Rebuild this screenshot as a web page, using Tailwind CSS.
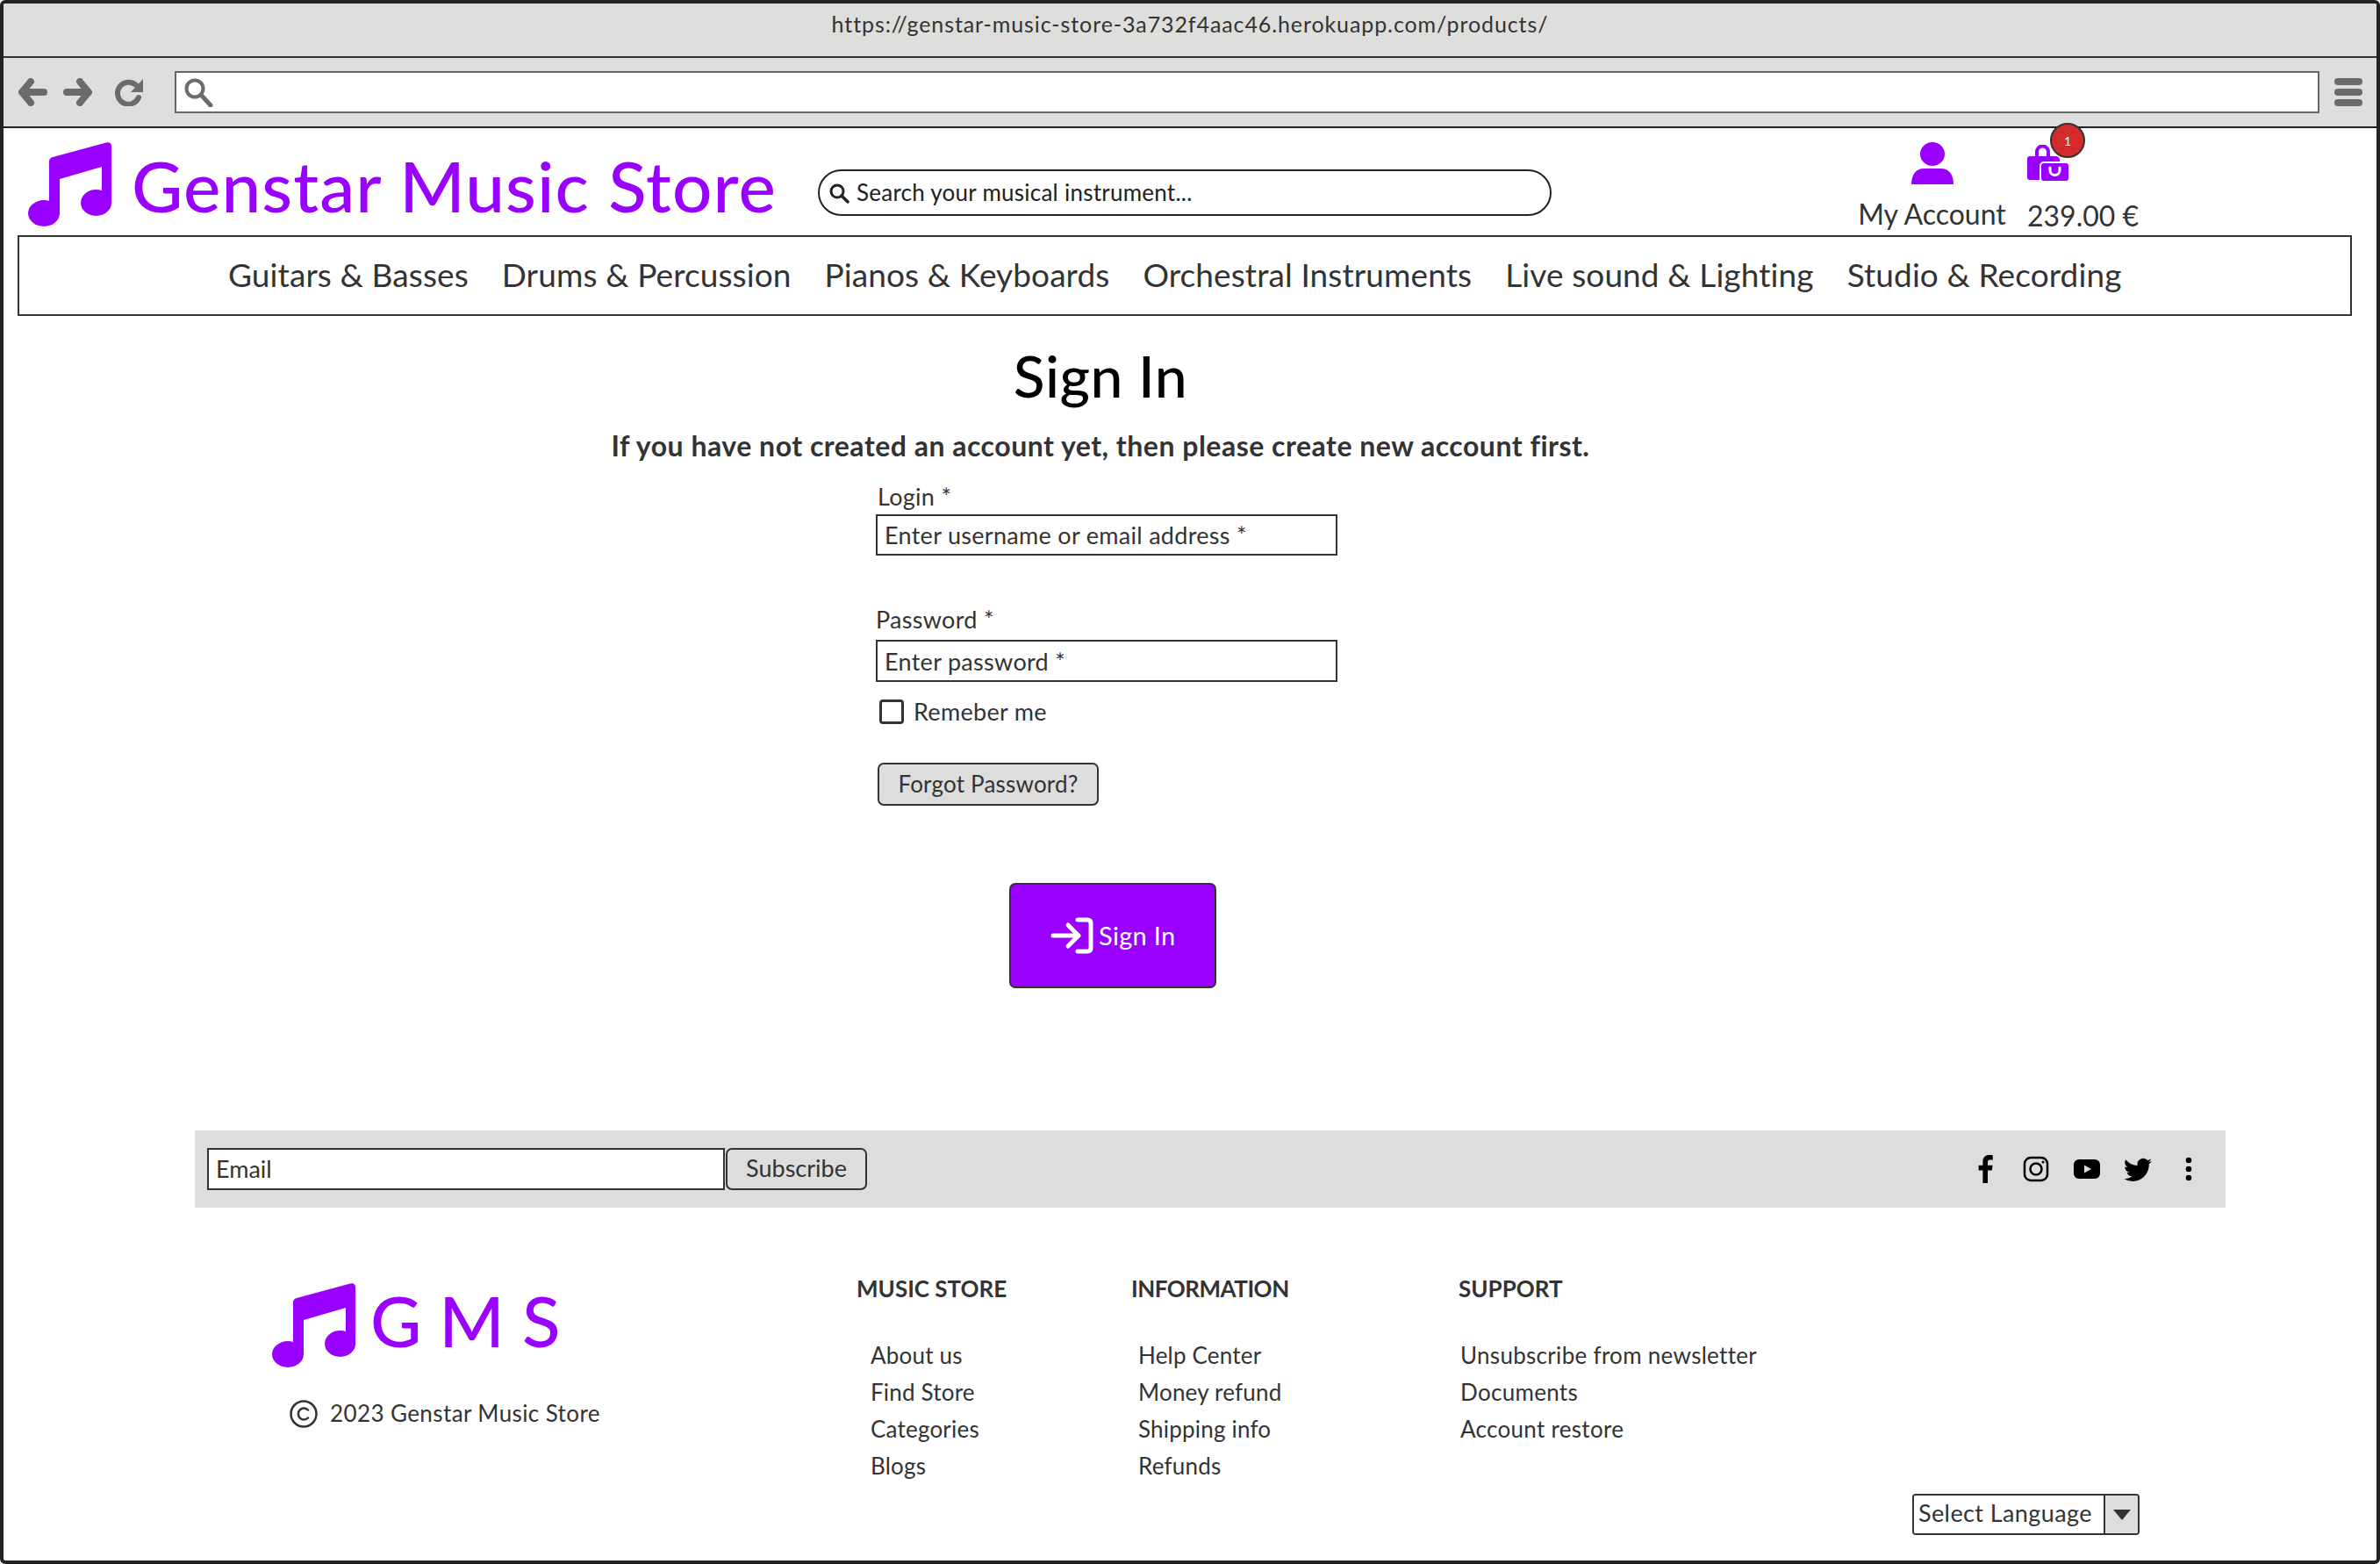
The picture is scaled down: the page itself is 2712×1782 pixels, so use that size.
<!DOCTYPE html>
<html lang="en">
<head>
    <meta charset="UTF-8">
    <title>Genstar Music Store</title>
    <script src="https://cdn.jsdelivr.net/npm/@tailwindcss/browser@4"></script>
</head>
<body class="bg-white font-['Lato',sans-serif] text-[#333]">
    <svg class="hidden">
        <symbol id="note" viewBox="0 0 96 96">
            <path d="M24 22Q24 18 28 17L89 .5Q95-.5 95 5V70H84V28L36 42V82H24Z" fill="#9900ff"/>
            <ellipse cx="18" cy="81" rx="18" ry="15" fill="#9900ff"/>
            <ellipse cx="77.5" cy="69" rx="17.5" ry="15" fill="#9900ff"/>
        </symbol>
    </svg>

    <div class="w-[2712px] h-[1782px] border-4 border-[#222] rounded-[6px] overflow-hidden">
        <!-- Browser chrome -->
        <div class="h-[62px] bg-[#dededc] border-b-2 border-[#333] flex justify-center pt-[7px] text-[25px] leading-[32px] tracking-[0.9px]">
            https://genstar-music-store-3a732f4aac46.herokuapp.com/products/
        </div>
        <div class="h-[80px] bg-[#dededc] border-b-2 border-[#222] flex items-center">
            <svg class="ml-[17px] w-[33px] h-[32px]" viewBox="0 0 33 32" fill="none" stroke="#6b6b6b" stroke-width="8" stroke-linecap="round" stroke-linejoin="round"><path d="M14 4 4 16l10 12M5 16h24"/></svg>
            <svg class="ml-[18px] w-[33px] h-[32px]" viewBox="0 0 33 32" fill="none" stroke="#6b6b6b" stroke-width="8" stroke-linecap="round" stroke-linejoin="round"><path d="M19 4l10 12-10 12M28 16H4"/></svg>
            <svg class="ml-[26px] w-[33px] h-[32px]" viewBox="0 0 33 32"><path d="M27 22a12.500 12.500 0 1 1-3-14" fill="none" stroke="#6b6b6b" stroke-width="6" stroke-linecap="round"/><path d="M32 1v15H18Z" fill="#6b6b6b"/></svg>
            <div class="ml-[35px] w-[2444px] h-[48px] bg-white border-2 border-[#666] flex items-center pl-[9px]">
                <svg class="w-[33px] h-[33px]" viewBox="0 0 33 33" fill="none" stroke="#6b6b6b" stroke-linecap="round"><circle cx="12" cy="12" r="9.500" stroke-width="4"/><path d="M19 19 30 31" stroke-width="5"/></svg>
            </div>
            <div class="ml-[17px] flex flex-col gap-[4px]">
                <div class="w-[32px] h-[8px] bg-[#6b6b6b] rounded-full"></div>
                <div class="w-[32px] h-[8px] bg-[#6b6b6b] rounded-full"></div>
                <div class="w-[32px] h-[8px] bg-[#6b6b6b] rounded-full"></div>
            </div>
        </div>

        <!-- Header -->
        <div class="h-[122px] flex relative">
            <svg class="ml-[28px] mt-[16px] w-[96px] h-[96px]"><use href="#note"/></svg>
            <div class="w-[804px] pl-[22px] pt-[20px] text-[80px] leading-[90px] font-medium text-[#9900ff] tracking-[1.1px] whitespace-nowrap">Genstar Music Store</div>
            <div class="mt-[47px] w-[836px] h-[53px] border-2 border-[#222] rounded-full flex items-center pl-[10px]">
                <svg class="w-[24px] h-[24px] shrink-0" viewBox="0 0 24 24" fill="none" stroke="#222" stroke-linecap="round"><circle cx="10" cy="10" r="7" stroke-width="3"/><path d="M15 15l7 7" stroke-width="3.500"/></svg>
                <input class="ml-[8px] w-[780px] text-[26px] tracking-[0.25px] text-[#222] placeholder:text-[#222] outline-none" placeholder="Search your musical instrument...">
            </div>
            <div class="ml-[352px] w-[163px] flex flex-col items-center">
                <svg class="mt-[16px] w-[48px] h-[48px]" viewBox="0 0 48 48" fill="#9900ff"><ellipse cx="24" cy="13.500" rx="14" ry="13.500"/><path d="M0 48C0 36 6 30 14 30H34C42 30 48 36 48 48Z"/></svg>
                <div class="mt-[14px] text-[32px] leading-[40px] whitespace-nowrap">My Account</div>
            </div>
            <div class="ml-[27px] flex flex-col">
                <svg class="mt-[19px] w-[48px] h-[42px]" viewBox="0 0 48 42"><path d="M11 14V8a6.500 6.500 0 0 1 13 0v6" fill="none" stroke="#9900ff" stroke-width="4"/><path d="M3 13H32Q37 13 37 18V37Q37 40 34 40H3Q0 40 0 37V16Q0 13 3 13Z" fill="#9900ff"/><rect x="15" y="20" width="33" height="22" rx="4" fill="#9900ff" stroke="#fff" stroke-width="2"/><path d="M26 26v3a5.500 5.500 0 0 0 11 0v-3" fill="none" stroke="#fff" stroke-width="3" stroke-linecap="round"/></svg>
                <div class="mt-[19px] text-[32px] leading-[40px] whitespace-nowrap">239.00 €</div>
            </div>
            <div class="absolute left-[2332px] top-[-6px] w-[40px] h-[40px] rounded-full bg-[#d32a2a] border-2 border-[#333] flex items-center justify-center text-white text-[14px]">1</div>
        </div>

        <!-- Nav -->
        <nav class="ml-[16px] w-[2660px] h-[92px] border-2 border-[#333] flex items-center pl-[238px] pb-[3px] gap-[38px] text-[37px] tracking-[0.1px] whitespace-nowrap">
            <a>Guitars &amp; Basses</a>
            <a>Drums &amp; Percussion</a>
            <a>Pianos &amp; Keyboards</a>
            <a>Orchestral Instruments</a>
            <a>Live sound &amp; Lighting</a>
            <a>Studio &amp; Recording</a>
        </nav>

        <!-- Sign in form -->
        <main>
            <h1 class="w-[2500px] mt-[34px] h-[68px] text-center text-[66px] leading-[68px] tracking-[0.5px] font-medium text-black">Sign In</h1>
            <p class="w-[2500px] mt-[26px] h-[40px] text-center text-[32px] leading-[40px] font-bold tracking-[0.5px]">If you have not created an account yet, then please create new account first.</p>
            <form class="ml-[994px] w-[526px] text-[27px] tracking-[0.3px]">
                <label class="block mt-[23px] h-[30px] leading-[30px] pl-[2px]">Login *</label>
                <input class="block mt-[5px] w-full h-[47px] border-2 border-[#333] px-[8px] placeholder:text-[#333] outline-none" placeholder="Enter username or email address *">
                <label class="block mt-[58px] h-[30px] leading-[30px]">Password *</label>
                <input class="block mt-[8px] w-full h-[48px] border-2 border-[#333] px-[8px] placeholder:text-[#333] outline-none" placeholder="Enter password *">
                <div class="mt-[20px] flex items-center h-[28px] pl-[4px]">
                    <div class="w-[28px] h-[28px] border-[3px] border-[#333] rounded-[4px]"></div>
                    <span class="ml-[11px]">Remeber me</span>
                </div>
                <button type="button" class="block mt-[44px] ml-[2px] w-[252px] h-[49px] border-2 border-[#333] rounded-[7px] bg-[#ddd] text-[26px] tracking-[0.2px]">Forgot Password?</button>
                <button type="button" class="mt-[88px] ml-[152px] w-[236px] h-[120px] border-2 border-[#333] rounded-[7px] bg-[#9900ff] text-white flex items-center pl-[45px]">
                    <svg class="w-[50px] h-[42px]" viewBox="0 0 50 42" fill="none" stroke="#fff" stroke-width="5" stroke-linecap="round" stroke-linejoin="round"><path d="M3 21H32M20 9l12 12-12 12M31 3h11q4 0 4 4v28q0 4-4 4H31"/></svg>
                    <span class="ml-[5px] text-[29px]">Sign In</span>
                </button>
            </form>
        </main>

        <!-- Newsletter bar -->
        <div class="mt-[162px] ml-[218px] w-[2314px] h-[88px] bg-[#ddd] flex items-center pl-[14px] text-[27px]">
            <input class="w-[590px] h-[48px] bg-white border-2 border-[#333] px-[8px] pb-[2px] placeholder:text-[#333] outline-none" placeholder="Email">
            <button type="button" class="ml-[1px] w-[161px] h-[48px] border-2 border-[#333] rounded-[7px] bg-[#ddd] pb-[2px]">Subscribe</button>
            <div class="ml-auto mr-[26px] flex items-center gap-[26px]">
                <svg class="w-[32px] h-[32px]" viewBox="0 0 16 16" fill="#000"><path d="M9.500 16V8.700h2.400l.4-2.800H9.500V4.100c0-.8.2-1.400 1.400-1.400h1.500V.2C12.100.1 11.300 0 10.300 0 8.200 0 6.700 1.300 6.700 3.700v2.200H4.300v2.800h2.400V16z"/></svg>
                <svg class="w-[32px] h-[32px]" viewBox="0 0 32 32" fill="none" stroke="#000" stroke-width="2.500"><rect x="3" y="3" width="26" height="26" rx="7"/><circle cx="16" cy="16" r="6.500"/><circle cx="24" cy="8" r="1.500" fill="#000" stroke="none"/></svg>
                <svg class="w-[32px] h-[32px]" viewBox="0 0 32 32"><rect x="1" y="5" width="30" height="22" rx="6" fill="#000"/><path d="M13 11.500v9l8-4.500Z" fill="#ddd"/></svg>
                <svg class="w-[32px] h-[32px]" viewBox="0 0 16 16" fill="#000"><path d="M5.026 15c6.038 0 9.341-5.003 9.341-9.334 0-.14 0-.282-.006-.422A6.685 6.685 0 0 0 16 3.542a6.658 6.658 0 0 1-1.889.518 3.301 3.301 0 0 0 1.447-1.817 6.533 6.533 0 0 1-2.087.793A3.286 3.286 0 0 0 7.875 6.030a9.325 9.325 0 0 1-6.767-3.429 3.289 3.289 0 0 0 1.018 4.382A3.323 3.323 0 0 1 .64 6.575v.045a3.288 3.288 0 0 0 2.632 3.218 3.203 3.203 0 0 1-.865.115 3.230 3.230 0 0 1-.614-.057 3.283 3.283 0 0 0 3.067 2.277A6.588 6.588 0 0 1 .78 13.580a6.320 6.320 0 0 1-.78-.045A9.344 9.344 0 0 0 5.026 15z"/></svg>
                <svg class="w-[32px] h-[32px]" viewBox="0 0 32 32" fill="#000"><circle cx="16" cy="6" r="3.300"/><circle cx="16" cy="16" r="3.300"/><circle cx="16" cy="26" r="3.300"/></svg>
            </div>
        </div>

        <!-- Footer -->
        <footer class="mt-[77px] ml-[306px] flex text-[26px]">
            <div class="w-[666px]">
                <div class="mt-[9px] flex items-center">
                    <svg class="w-[96px] h-[96px]"><use href="#note"/></svg>
                    <span class="ml-[16px] mt-[-12px] text-[80px] leading-[90px] font-medium text-[#9900ff] tracking-[20px] whitespace-nowrap">GMS</span>
                </div>
                <div class="mt-[33px] ml-[20px] flex items-center">
                    <svg class="w-[32px] h-[32px]" viewBox="0 0 32 32" fill="none" stroke="#333" stroke-width="2.500"><circle cx="16" cy="16" r="14.500"/><path d="M21 11.500a6.500 6.500 0 1 0 0 9" stroke-linecap="round"/></svg>
                    <span class="ml-[14px] whitespace-nowrap tracking-[0.4px]">2023 Genstar Music Store</span>
                </div>
            </div>
            <div class="w-[313px]">
                <h3 class="h-[30px] leading-[30px] font-bold">MUSIC STORE</h3>
                <ul class="mt-[40px] pl-[16px] leading-[42px] tracking-[0.2px]">
                    <li>About us</li>
                    <li>Find Store</li>
                    <li>Categories</li>
                    <li>Blogs</li>
                </ul>
            </div>
            <div class="w-[373px]">
                <h3 class="h-[30px] leading-[30px] font-bold tracking-[-0.5px]">INFORMATION</h3>
                <ul class="mt-[40px] pl-[8px] leading-[42px] tracking-[0.2px]">
                    <li>Help Center</li>
                    <li>Money refund</li>
                    <li>Shipping info</li>
                    <li>Refunds</li>
                </ul>
            </div>
            <div>
                <h3 class="h-[30px] leading-[30px] font-bold">SUPPORT</h3>
                <ul class="mt-[40px] pl-[2px] leading-[42px] whitespace-nowrap tracking-[0.3px]">
                    <li>Unsubscribe from newsletter</li>
                    <li>Documents</li>
                    <li>Account restore</li>
                </ul>
            </div>
        </footer>
        <div class="mt-[11px] ml-[2175px] w-[259px] h-[47px] border-2 border-[#333] rounded-[4px] flex text-[27px] tracking-[0.4px] overflow-hidden">
            <div class="w-[218px] bg-white border-r-2 border-[#333] pl-[5px] leading-[40px]">Select Language</div>
            <div class="flex-1 bg-[#ddd] flex items-center justify-center">
                <svg class="w-[20px] h-[12px]" viewBox="0 0 20 12" fill="#333"><path d="M0 0H20L10 12Z"/></svg>
            </div>
        </div>
    </div>
</body>
</html>
